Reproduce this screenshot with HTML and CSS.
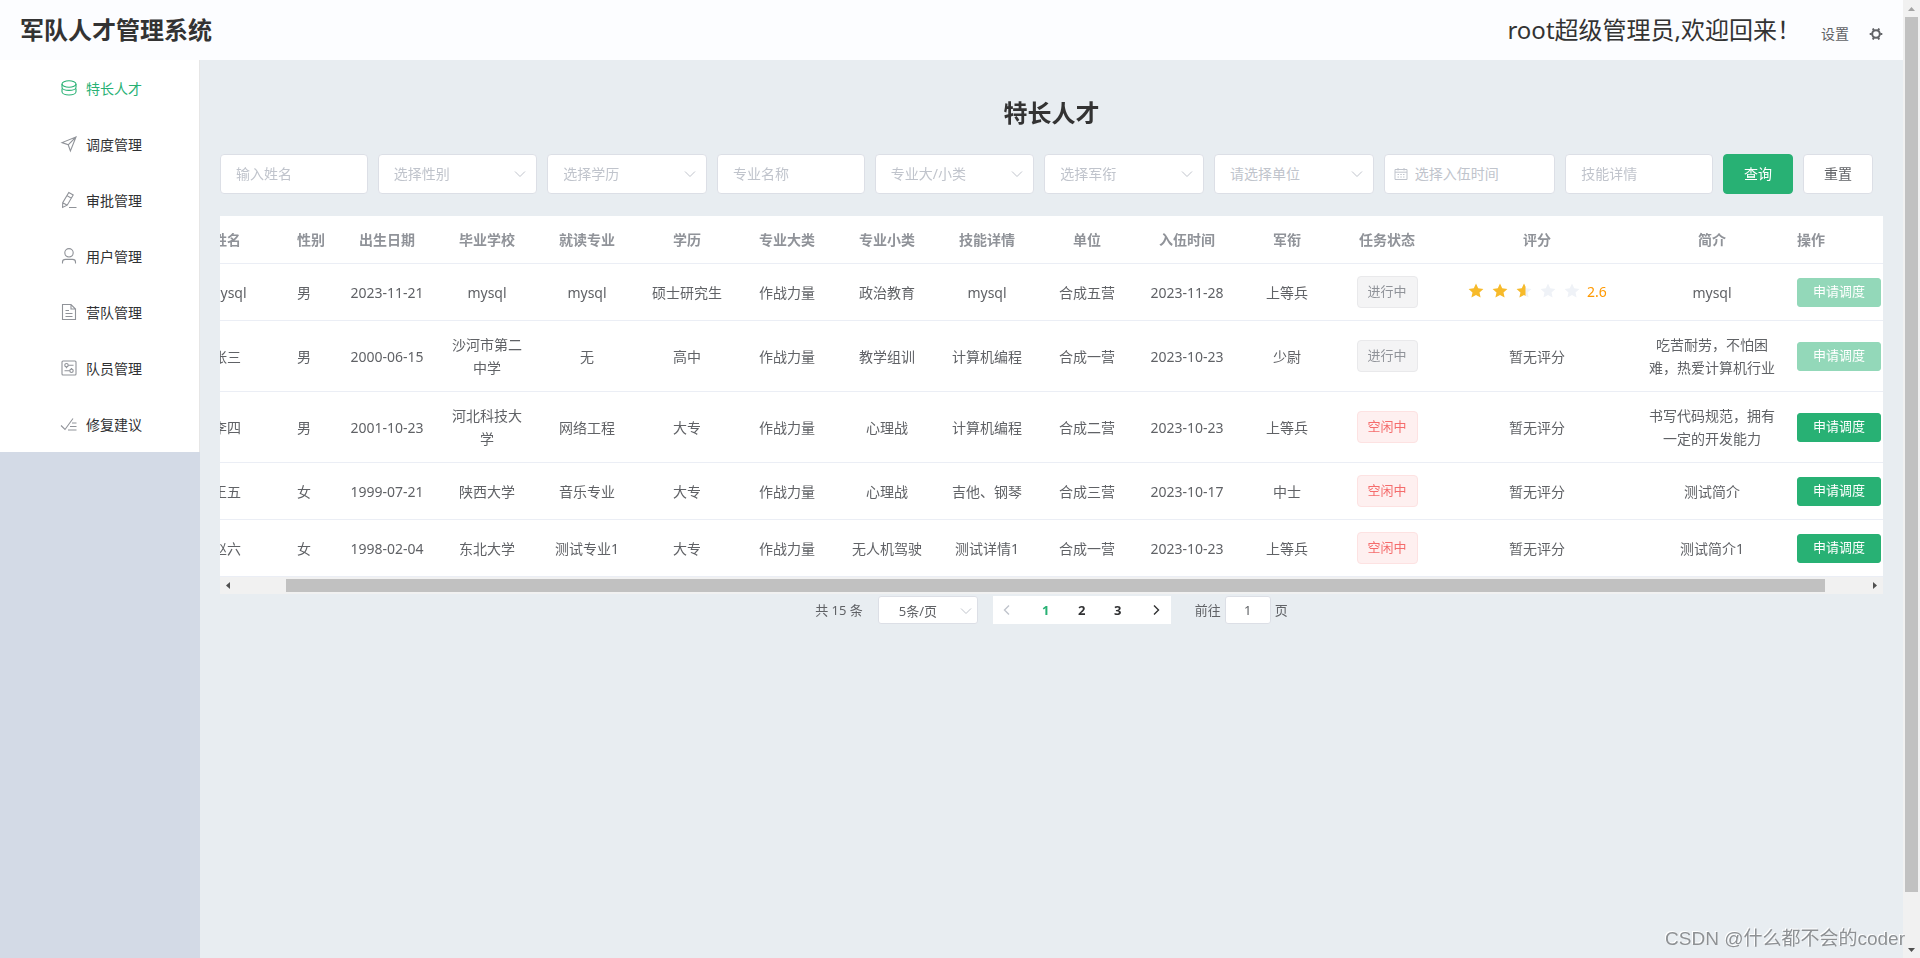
FILE: index.html
```html
<!DOCTYPE html>
<html lang="zh-CN">
<head>
<meta charset="utf-8">
<title>军队人才管理系统</title>
<link rel="stylesheet" href="styles.css">
</head>
<body>
<svg class="defs" aria-hidden="true">
  <symbol id="chevron" viewBox="0 0 14 14"><path d="M2 4.5 7 9.5 12 4.5"/></symbol>
  <symbol id="star" viewBox="0 0 18 18"><path d="M9 1.500 11.200 6.300 16.400 6.900 12.500 10.400 13.600 15.600 9 13 4.400 15.600 5.500 10.400 1.600 6.900 6.800 6.300Z"/></symbol>
</svg>
<div class="app">
  <header class="topbar">
    <h1 class="brand">军队人才管理系统</h1>
    <div class="user">
      <span class="welcome">root超级管理员,欢迎回来！</span>
      <button class="settings" type="button">设置
        <svg class="gear" viewBox="0 0 14 14"><circle cx="7" cy="7" r="3.800"/><path d="M11.300 7H13.300M9.200 10.700 10.200 12.500M4.800 10.700 3.800 12.500M2.700 7H.7M4.800 3.300 3.800 1.500M9.200 3.300 10.200 1.500"/></svg>
      </button>
    </div>
  </header>
  <div class="body">
    <aside class="side">
      <nav class="menu">
        <a class="item active" href="#"><svg class="ico" viewBox="0 0 18 18"><ellipse cx="9" cy="5" rx="7" ry="3.200"/><path d="M2 5v3.200c0 1.800 3.100 3.200 7 3.200s7-1.400 7-3.200V5M2 9.500V12.800C2 14.600 5.100 16 9 16s7-1.400 7-3.200V9.500"/></svg>特长人才</a>
        <a class="item" href="#"><svg class="ico" viewBox="0 0 18 18"><path d="M16 2 2 7.600 8.200 9.800 10.400 16ZM8.200 9.800 16 2"/></svg>调度管理</a>
        <a class="item" href="#"><svg class="ico" viewBox="0 0 18 18"><path d="M8.800 1.500 13.200 4 7.200 14.200 2.600 16.400 2.700 11.700ZM7 4.600 11.400 7.200M2.700 11.700 7.200 14.200M9 16.500H16.500"/></svg>审批管理</a>
        <a class="item" href="#"><svg class="ico" viewBox="0 0 18 18"><circle cx="9" cy="5.800" r="4.200"/><path d="M2.500 16.500V15Q2.500 12.400 5.500 12.400H12.500Q15.500 12.400 15.500 15V16.500"/></svg>用户管理</a>
        <a class="item" href="#"><svg class="ico" viewBox="0 0 18 18"><path d="M2.500 1.500H11L15.500 6V16.500H2.500ZM11 1.500V6H15.500M5.500 7.500H9M5.500 10.500H12.500M5.500 13.500H12.500"/></svg>营队管理</a>
        <a class="item" href="#"><svg class="ico" viewBox="0 0 18 18"><rect x="2" y="2" width="14" height="14" rx="1"/><circle cx="6.500" cy="6.200" r="1.700"/><circle cx="11.500" cy="11.800" r="1.700"/><path d="M8.200 6.200H13.500M4.500 11.800H9.800M6.500 7.900V9.200M11.500 10.100V9"/></svg>队员管理</a>
        <a class="item" href="#"><svg class="ico" viewBox="0 0 18 18"><path d="M1 10.500 5 14.500 13 3.500M12 8H16.500M10 11.500H16.500M8 15H16.500"/></svg>修复建议</a>
      </nav>
    </aside>
    <main class="main">
      <h2 class="title">特长人才</h2>
      <form class="filters">
        <input class="box" type="text" placeholder="输入姓名" aria-label="姓名">
        <div class="pick"><select class="box" aria-label="性别"><option>选择性别</option></select><svg class="arrow"><use href="#chevron"/></svg></div>
        <div class="pick"><select class="box" aria-label="学历"><option>选择学历</option></select><svg class="arrow"><use href="#chevron"/></svg></div>
        <input class="box" type="text" placeholder="专业名称" aria-label="专业名称">
        <div class="pick"><select class="box" aria-label="专业类别"><option>专业大/小类</option></select><svg class="arrow"><use href="#chevron"/></svg></div>
        <div class="pick"><select class="box" aria-label="军衔"><option>选择军衔</option></select><svg class="arrow"><use href="#chevron"/></svg></div>
        <div class="pick"><select class="box" aria-label="单位"><option>请选择单位</option></select><svg class="arrow"><use href="#chevron"/></svg></div>
        <div class="date"><svg class="cal" viewBox="0 0 14 14"><path d="M1 2.500H13V12.500H1ZM1 5.200H13M4 1V3.500M10 1V3.500M3.500 7.500H5M6.300 7.500H7.800M9 7.500H10.500M3.500 10H5M6.300 10H7.800M9 10H10.500"/></svg><input class="box" type="text" placeholder="选择入伍时间" aria-label="入伍时间"></div>
        <input class="box" type="text" placeholder="技能详情" aria-label="技能详情">
        <button class="btn primary" type="button">查询</button>
        <button class="btn" type="button">重置</button>
      </form>
      <div class="viewport" id="viewport">
        <table class="grid">
          <colgroup><col class="w120"><col class="w50"><col span="11" class="w100"><col class="w200"><col class="w150"><col class="w140"></colgroup>
          <thead><tr><th>姓名</th><th class="left">性别</th><th>出生日期</th><th>毕业学校</th><th>就读专业</th><th>学历</th><th>专业大类</th><th>专业小类</th><th>技能详情</th><th>单位</th><th>入伍时间</th><th>军衔</th><th>任务状态</th><th>评分</th><th>简介</th><th class="left">操作</th></tr></thead>
          <tbody>
            <tr><td>mysql</td><td class="left">男</td><td>2023-11-21</td><td>mysql</td><td>mysql</td><td>硕士研究生</td><td>作战力量</td><td>政治教育</td><td>mysql</td><td>合成五营</td><td>2023-11-28</td><td>上等兵</td><td><span class="tag">进行中</span></td>
              <td><div class="rate"><svg class="star on"><use href="#star"/></svg><svg class="star on"><use href="#star"/></svg><svg class="star" viewBox="0 0 18 18"><use href="#star"/><path class="on" d="M9 1.500 10.500 4.800V13.900L9 13 4.400 15.600 5.500 10.400 1.600 6.900 6.800 6.300Z"/></svg><svg class="star"><use href="#star"/></svg><svg class="star"><use href="#star"/></svg><span class="score">2.6</span></div></td>
              <td>mysql</td><td class="left"><button class="btn act" type="button" disabled>申请调度</button></td></tr>
            <tr><td>张三</td><td class="left">男</td><td>2000-06-15</td><td>沙河市第二中学</td><td>无</td><td>高中</td><td>作战力量</td><td>教学组训</td><td>计算机编程</td><td>合成一营</td><td>2023-10-23</td><td>少尉</td><td><span class="tag">进行中</span></td><td>暂无评分</td><td>吃苦耐劳，不怕困难，热爱计算机行业</td><td class="left"><button class="btn act" type="button" disabled>申请调度</button></td></tr>
            <tr><td>李四</td><td class="left">男</td><td>2001-10-23</td><td>河北科技大学</td><td>网络工程</td><td>大专</td><td>作战力量</td><td>心理战</td><td>计算机编程</td><td>合成二营</td><td>2023-10-23</td><td>上等兵</td><td><span class="tag free">空闲中</span></td><td>暂无评分</td><td>书写代码规范，拥有一定的开发能力</td><td class="left"><button class="btn act" type="button">申请调度</button></td></tr>
            <tr><td>王五</td><td class="left">女</td><td>1999-07-21</td><td>陕西大学</td><td>音乐专业</td><td>大专</td><td>作战力量</td><td>心理战</td><td>吉他、钢琴</td><td>合成三营</td><td>2023-10-17</td><td>中士</td><td><span class="tag free">空闲中</span></td><td>暂无评分</td><td>测试简介</td><td class="left"><button class="btn act" type="button">申请调度</button></td></tr>
            <tr><td>赵六</td><td class="left">女</td><td>1998-02-04</td><td>东北大学</td><td>测试专业1</td><td>大专</td><td>作战力量</td><td>无人机驾驶</td><td>测试详情1</td><td>合成一营</td><td>2023-10-23</td><td>上等兵</td><td><span class="tag free">空闲中</span></td><td>暂无评分</td><td>测试简介1</td><td class="left"><button class="btn act" type="button">申请调度</button></td></tr>
          </tbody>
        </table>
      </div>
      <div class="hbar">
        <svg class="tri" viewBox="0 0 17 17"><path d="M10 5V12L6 8.500Z"/></svg>
        <div class="htrack"><div class="hthumb"></div></div>
        <svg class="tri" viewBox="0 0 17 17"><path d="M7 5V12L11 8.500Z"/></svg>
      </div>
      <div class="pages">
        <span>共 15 条</span>
        <div class="size"><select class="box small" aria-label="每页条数"><option>5条/页</option></select><svg class="arrow"><use href="#chevron"/></svg></div>
        <div class="pager">
          <button class="pg prev" type="button" aria-label="上一页" disabled><svg viewBox="0 0 12 12"><path d="M8 1.500 3.500 6 8 10.500"/></svg></button>
          <button class="pg current" type="button">1</button>
          <button class="pg" type="button">2</button>
          <button class="pg" type="button">3</button>
          <button class="pg next" type="button" aria-label="下一页"><svg viewBox="0 0 12 12"><path d="M4 1.500 8.500 6 4 10.500"/></svg></button>
        </div>
        <label class="jump">前往<input class="box small" type="text" value="1">页</label>
      </div>
    </main>
  </div>
</div>
<div class="vbar">
  <svg class="tri dim" viewBox="0 0 17 17"><path d="M5 11H12L8.500 7Z"/></svg>
  <div class="vtrack"><div class="vthumb"></div></div>
  <svg class="tri" viewBox="0 0 17 17"><path d="M5 7H12L8.500 11Z"/></svg>
</div>
<div class="mark">CSDN @什么都不会的coder</div>
<script src="main.js"></script>
</body>
</html>
```
FILE: main.js
```js
document.getElementById('viewport').scrollLeft = 53;
```
FILE: styles.css
```css
* { box-sizing: border-box; }
body {
  margin: 0;
  height: 100vh;
  display: flex;
  overflow: hidden;
  font: 14px/23px "Noto Sans", "Noto Sans CJK SC", sans-serif;
  color: #606266;
}
button, input, select { font: inherit; color: inherit; margin: 0; }
.defs { position: absolute; width: 0; height: 0; }

.app { flex: 1; min-width: 0; display: flex; flex-direction: column; }
.topbar {
  height: 60px;
  padding: 0 20px;
  display: flex;
  align-items: center;
  justify-content: space-between;
  background: #fcfdff;
  color: #333;
}
.brand { margin: 0; font-size: 24px; line-height: 60px; }
.user { display: flex; align-items: baseline; gap: 20px; }
.welcome { font-size: 24px; line-height: 60px; }
.settings {
  display: flex;
  align-items: center;
  gap: 20px;
  padding: 0;
  border: 0;
  background: none;
  color: #606266;
}
.gear { width: 14px; height: 14px; fill: none; stroke: #606266; stroke-width: 2; }

.body { flex: 1; min-height: 0; display: flex; }
.side { width: 200px; background: #d3dae6; }
.menu { background: #fff; border-right: 1px solid #e6e6e6; }
.item {
  height: 56px;
  display: flex;
  align-items: center;
  justify-content: center;
  color: #303133;
  text-decoration: none;
}
.ico {
  width: 18px;
  height: 18px;
  margin: 0 8px 0 3px;
  fill: none;
  stroke: #909399;
  stroke-width: 1.1;
}
.active { color: #28b174; }
.active .ico { stroke: #28b174; }

.main { flex: 1; min-width: 0; padding: 37px 20px 20px; background: #e8edf1; }
.title {
  margin: 0 0 25px;
  font-size: 24px;
  line-height: 32px;
  text-align: center;
  color: #333;
}
.filters {
  display: grid;
  grid-template-columns: 37fr 40fr 40fr 37fr 40fr 40fr 40fr 43fr 37fr 70px 70px;
  gap: 10px;
  padding-right: 10px;
  margin-bottom: 22px;
}
.box {
  width: 100%;
  height: 40px;
  padding: 0 15px 2px;
  border: 1px solid #dcdfe6;
  border-radius: 4px;
  background: #fff;
  appearance: none;
  outline: 0;
}
.box::placeholder { color: #c0c4cc; opacity: 1; }
.pick, .date { position: relative; }
.pick .box { color: #c0c4cc; }
.date .box { padding-left: 30px; }
.arrow, .cal { position: absolute; width: 14px; height: 14px; fill: none; stroke: #c0c4cc; pointer-events: none; }
.arrow { right: 10px; top: 13px; }
.cal { left: 10px; top: 13px; }
.btn {
  height: 40px;
  padding: 0 0 2px;
  border: 1px solid #dcdfe6;
  border-radius: 4px;
  background: #fff;
}
.primary, .act { background: #28b174; border-color: #28b174; color: #fff; }
.act { display: block; width: 84px; height: 29px; font-size: 13px; line-height: 20px; border-radius: 3px; }
.act:disabled { background: #93d8b9; border-color: #93d8b9; }

.viewport { overflow-x: auto; scrollbar-width: none; background: #fff; }
.grid { width: 100%; min-width: 1760px; table-layout: fixed; border-collapse: separate; border-spacing: 0; text-align: center; }
.grid th, .grid td { padding: 12px 10px; border-bottom: 1px solid #ebeef5; }
.grid th { color: #909399; }
.grid .left { text-align: left; }
.w50 { width: 50px; }
.w100 { width: 100px; }
.w120 { width: 120px; }
.w140 { width: 140px; }
.w150 { width: 150px; }
.w200 { width: 200px; }
.tag {
  display: block;
  width: 61px;
  height: 32px;
  margin: 0 auto;
  border: 1px solid #e9e9eb;
  border-radius: 4px;
  background: #f4f4f5;
  color: #909399;
  font-size: 13px;
  line-height: 28px;
}
.free { background: #fef0f0; border-color: #fde2e2; color: #f56c6c; }
.rate { display: flex; align-items: center; justify-content: center; padding-bottom: 2px; }
.star { width: 18px; height: 18px; margin-right: 6px; fill: #eff2f7; }
.on { fill: #f7ba2a; }
.score { color: #f90; }

.hbar { height: 17px; display: flex; background: #f1f1f1; }
.tri { width: 17px; height: 17px; fill: #505050; }
.dim { fill: #a3a3a3; }
.htrack { flex: 1; padding: 2px 0; }
.hthumb { width: 94.5%; height: 13px; margin-left: 3%; background: #c1c1c1; }

.pages {
  display: flex;
  align-items: center;
  justify-content: center;
  padding-top: 2px;
  font-size: 13px;
  line-height: 28px;
}
.size { position: relative; width: 100px; margin: 0 15px; display: flex; }
.small { height: 28px; border-radius: 3px; font-size: 13px; }
.size .small { padding: 0 25px 2px 20px; }
.size .arrow { right: 5px; top: 8px; }
.pager { display: flex; background: #fff; }
.pg {
  display: flex;
  align-items: center;
  justify-content: center;
  width: 36px;
  height: 28px;
  padding: 0 6px;
  border: 0;
  background: none;
  color: #303133;
  font-weight: 700;
}
.pg svg { width: 12px; height: 12px; fill: none; stroke: #303133; stroke-width: 1.4; }
.prev { width: 35px; padding-right: 12px; }
.prev svg { stroke: #c0c4cc; }
.next { width: 35px; padding-left: 12px; }
.current { color: #28b174; }
.jump { display: flex; margin-left: 24px; gap: 4px; }
.jump .small { width: 46px; padding: 0 3px; text-align: center; }

.vbar { width: 17px; display: flex; flex-direction: column; background: #f1f1f1; }
.vtrack { flex: 1; padding: 0 2px; }
.vthumb { height: 94.7%; background: #c1c1c1; }
.mark {
  position: absolute;
  right: 15px;
  bottom: 6px;
  font: 19px/26px "Liberation Sans", "Noto Sans CJK SC", sans-serif;
  color: #8e9194;
  text-shadow: -1px -1px 0 #fff;
}
```
